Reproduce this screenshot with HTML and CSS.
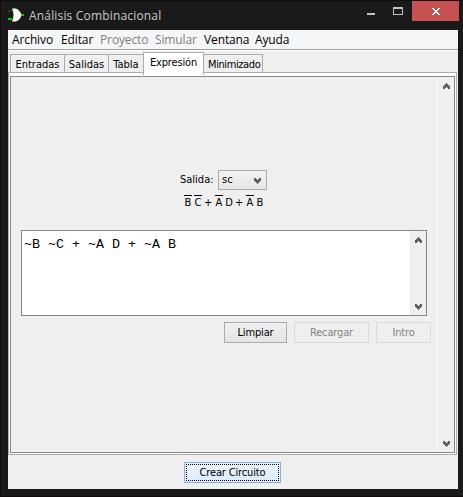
FILE: index.html
```html
<!DOCTYPE html>
<html lang="es">
<head>
<meta charset="utf-8">
<title>Análisis Combinacional</title>
<link rel="stylesheet" href="styles.css">
</head>
<body>
<svg class="defs" width="0" height="0">
  <symbol id="down" viewBox="0 0 7 6"><path d="M0 0h2v1h1v1h1v-1h1v-1h2v3h-1v1h-1v1h-1v1h-1v-1h-1v-1h-1v-1h-1z"/></symbol>
</svg>
<div class="window">
  <header class="titlebar">
    <svg class="logo" width="18" height="14" viewBox="0 0 18 14" shape-rendering="crispEdges">
      <path d="M0 2h4v2h-4z" fill="#005000"/>
      <path d="M0 10h4v2h-4zM14 6h2v2h-2z" fill="#00d000"/>
      <path shape-rendering="auto" d="M4 .500H8Q12 2 13.700 7Q12 12 8 13.500H4Q7 7 4 .500z" fill="#fff"/>
    </svg>
    <h1 class="title">Análisis Combinacional</h1>
    <div class="controls">
      <svg width="8" height="2" class="min"><path d="M0 0h8v2H0z"/></svg>
      <svg width="10" height="8" class="max" shape-rendering="crispEdges"><path fill-rule="evenodd" d="M0 0h10v8H0zM1 2v5h8V2z"/></svg>
      <div class="close"><svg width="8" height="7" viewBox="0 0 8 7" shape-rendering="crispEdges"><path d="M0 0h2v1h1v1h2v-1h1v-1h2v1h-1v1h-1v1h-1v1h1v1h1v1h1v1h-2v-1h-1v-1h-2v1h-1v1h-2v-1h1v-1h1v-1h1v-1h-1v-1h-1v-1h-1z"/></svg></div>
    </div>
  </header>
  <main class="content">
    <nav class="menu">
      <span class="m1">Archivo</span><span class="m2">Editar</span><span class="m3 off">Proyecto</span><span class="m4 off">Simular</span><span class="m5">Ventana</span><span class="m6">Ayuda</span>
    </nav>
    <div class="tabs">
      <div class="tab t1"><span>Entradas</span></div><div class="tab t2"><span>Salidas</span></div><div class="tab t3"><span>Tabla</span></div><div class="tab t4 active"><span>Expresión</span></div><div class="tab t5"><span>Minimizado</span></div>
    </div>
    <section class="pane">
      <div class="view">
        <div class="form">
          <div class="output"><span class="label">Salida:</span><div class="combo"><span>sc</span><svg class="chev" width="7" height="6"><use href="#down"/></svg></div></div>
          <div class="formula"><span class="v neg">B</span><span class="v neg">C</span><span class="op">+</span><span class="v neg">A</span><span class="v">D</span><span class="op">+</span><span class="v neg">A</span><span class="v">B</span></div>
          <div class="editor">
            <pre class="code">~B ~C + ~A D + ~A B</pre>
            <div class="track"><svg class="chev up" width="7" height="6"><use href="#down"/></svg><svg class="chev" width="7" height="6"><use href="#down"/></svg></div>
          </div>
          <div class="buttons"><div class="btn b1">Limpiar</div><div class="btn b2 off">Recargar</div><div class="btn b3 off">Intro</div></div>
        </div>
        <div class="track outer"><svg class="chev up" width="7" height="6"><use href="#down"/></svg><svg class="chev" width="7" height="6"><use href="#down"/></svg></div>
      </div>
    </section>
    <footer class="footer"><div class="btn create"><span>Crear Circuito</span></div></footer>
  </main>
</div>
</body>
</html>
```

FILE: styles.css
```css
* { box-sizing: border-box; }
body { margin: 0; width: 463px; height: 497px; overflow: hidden; font: 11px/14px "DejaVu Sans Condensed", "DejaVu Sans", sans-serif; font-stretch: condensed; color: #000; white-space: nowrap; }
svg { display: block; flex: none; }
.defs { display: none; }
.window { width: 463px; height: 497px; background: #1a1a1a; border: solid #100c0d; border-width: 1px 0 1px 1px; padding: 0 5px 7px 7px; }
.titlebar { height: 29px; display: flex; align-items: flex-start; }
.logo { margin-top: 7px; }
.title { margin: 6px 0 0 3px; font: 12px/18px "Open Sans", sans-serif; color: #c8c8c8; letter-spacing: .17px; }
.controls { margin-left: auto; margin-right: -1px; display: flex; fill: #c3c3c3; }
.min { margin-top: 12px; }
.max { margin: 6px 9px 0 18px; }
.close { width: 47px; height: 20px; background: #c75050; fill: #fff; display: flex; align-items: center; justify-content: center; }
.content { width: 450px; height: 459px; background: #efefef; display: flex; flex-direction: column; }
.menu { height: 20px; flex: none; background: #f5f6f8; border-bottom: 1px solid #a0a0a0; box-shadow: 0 1px #fff; display: flex; padding-left: 4px; font: 12px/20px "Open Sans", sans-serif; letter-spacing: -.12px; }
.menu .off { color: #7e7e7e; }
.m1 { width: 49px; }
.m2 { width: 39px; }
.m3 { width: 55px; }
.m4 { width: 49px; }
.m5 { width: 51px; }
.tabs { height: 22px; margin-top: 1px; flex: none; display: flex; align-items: flex-end; padding-left: 2px; }
.tab { height: 20px; border: 1px solid #acacac; border-bottom: 0; margin-right: -1px; display: flex; justify-content: center; line-height: 20px; background: #efefef; margin-bottom: -1px; }
.t1 { width: 55px; }
.t2 { width: 45px; }
.t3 { width: 36px; }
.t4 { width: 61px; letter-spacing: -.15px; }
.t5 { width: 60px; letter-spacing: -.4px; }
.tab.t5 { justify-content: flex-start; padding-left: 4px; letter-spacing: -.4px; }
.t1 { letter-spacing: 0; }
.tab.active { height: 23px; background: #fff; position: relative; margin-bottom: -2px; line-height: 20px; }
.pane { width: 449px; height: 383px; flex: none; margin-top: -1px; border: 1px solid #acacac; background: #fff; padding: 3px 1px 1px; }
.view { height: 377px; border: 1px solid #828790; background: #efefef; display: flex; }
.form { width: 426px; padding: 93px 0 0 10px; }
.output { display: flex; align-items: center; padding-left: 159px; height: 20px; }
.label { width: 38px; }
.combo { width: 49px; height: 20px; border: 1px solid #acacac; background: linear-gradient(#f1f1f1, #e6e6e6); display: flex; align-items: center; justify-content: space-between; padding: 0 5px 0 3px; }
.chev { fill: #606060; shape-rendering: crispEdges; }
.combo .chev { margin-top: 2px; }
.up { transform: rotate(180deg); }
.formula { display: flex; height: 13px; margin: 5px 0 0 163px; line-height: 14px; width: 79px; }
.v, .op { display: block; flex: none; height: 13px; text-align: center; border-top: 1px solid transparent; line-height: 13px; }
.v { width: 8px; margin-right: 2px; }
.op { width: 8px; margin: 0 3px 0 0; }
.neg { border-top-color: #000; }
.editor { width: 406px; height: 86px; margin-top: 22px; border: 1px solid #828790; background: #fff; display: flex; justify-content: space-between; }
.code { margin: 6px 0 0 2px; font: 13.330px/16px "Liberation Mono", monospace; }
.track { width: 16px; background: #efefef; display: flex; flex-direction: column; justify-content: space-between; align-items: center; padding: 6px 0 5px; }
.track.outer { width: 17px; border-left: 1px solid #fff; }
.buttons { display: flex; gap: 7px; margin: 6px 0 0 203px; }
.btn { flex: none; height: 21px; border: 1px solid #acacac; background: linear-gradient(#f0f0f0, #e5e5e5); line-height: 19px; text-align: center; letter-spacing: -.15px; }
.btn.off { color: #838383; border-color: #d9d9d9; background: #efefef; }
.b1 { width: 63px; }
.b2 { width: 75px; }
.b3 { width: 55px; }
.footer { padding: 7px 0 0 176px; }
.create { width: 97px; border-color: #7eb4ea; background: linear-gradient(#ecf4fc, #dcecfc); padding: 1px; }
.create span { display: block; height: 17px; line-height: 15px; border: 1px dotted #000; }
```
